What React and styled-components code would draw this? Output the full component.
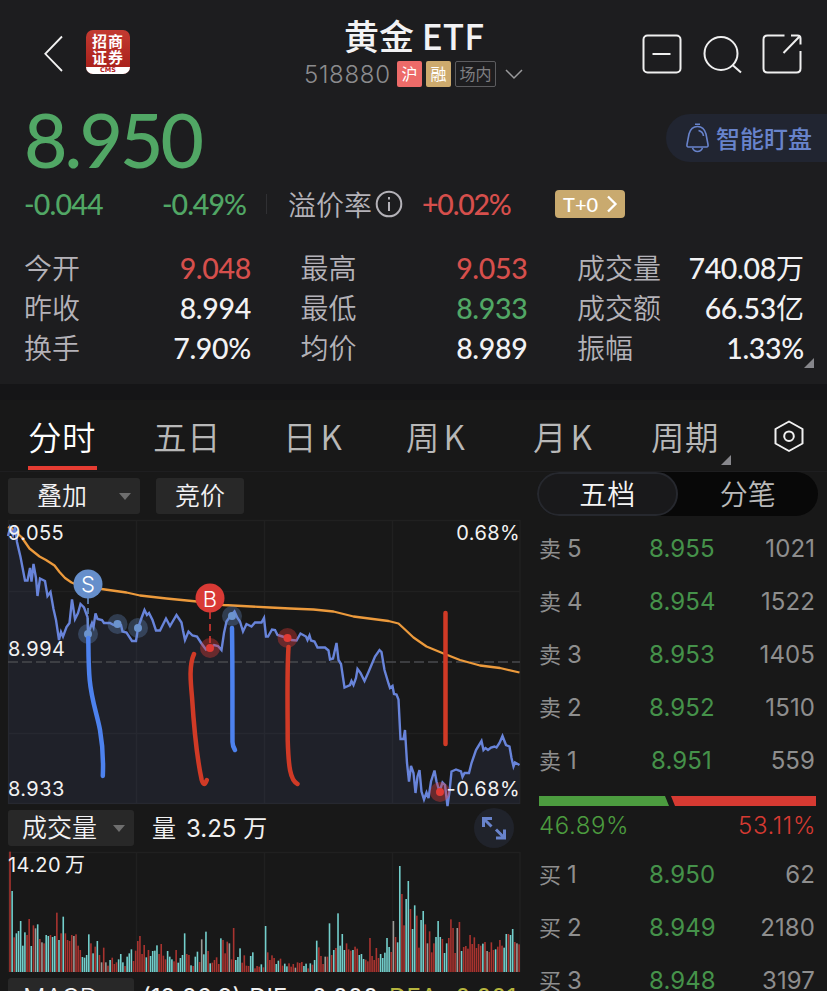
import React from "react";
import styled, { createGlobalStyle } from "styled-components";

const CJK = '"Noto Sans CJK SC", sans-serif';
const DIGITS = 'Lato, "Noto Sans CJK SC", sans-serif';
const UI = 'Inter, "Noto Sans CJK SC", sans-serif';

const tone = {
  up: "#d64f4c",
  down: "#51a765",
  plain: "#f2f2f4",
};

const GlobalStyle = createGlobalStyle`
  *, *::before, *::after { box-sizing: border-box; }
  html, body { margin: 0; background: #181818; overflow: hidden; }
  svg { display: block; }
`;

const Screen = styled.main`
  width: 827px;
  height: 991px;
  overflow: hidden;
  background: #181818;
  font-family: ${CJK};
  color: #f2f2f4;
  white-space: nowrap;
`;

const Quote = styled.section`
  height: 384px;
  background: #1d1d1f;
`;

const TopBar = styled.header`
  display: grid;
  grid-template-columns: 280px 268px 279px;
  height: 96px;
`;

const TopLeft = styled.div`
  display: flex;
  gap: 22px;
  padding: 30px 0 0 43px;
`;

const Logo = styled.div`
  display: flex;
  flex-direction: column;
  width: 44px;
  height: 44px;
  border-radius: 7px;
  overflow: hidden;
  background: linear-gradient(#c33a31, #a51d18);
  text-align: center;
`;

const LogoName = styled.div`
  height: 37px;
  padding-top: 3px;
  font: 700 15px/16px ${CJK};
  letter-spacing: 1px;
  color: #fff;
`;

const LogoFoot = styled.div`
  height: 7px;
  background: #fff;
  color: #b3201c;
  font: 700 6.5px/7px "DejaVu Sans", sans-serif;
`;

const Heading = styled.div`
  display: flex;
  flex-direction: column;
  align-items: center;
  padding-top: 14px;
`;

const Title = styled.h1`
  margin: 0;
  font: 500 35px/42px ${CJK};
`;

const SubTitle = styled.div`
  display: flex;
  align-items: center;
  gap: 4px;
  height: 26px;
  margin: 5px 0 0 2px;
`;

const Code = styled.span`
  width: 89px;
  font: 300 24px/28px ${UI};
  letter-spacing: 0.7px;
  padding-top: 2px;
  color: #8c8c8e;
`;

const Tag = styled.span`
  height: 26px;
  width: ${(p) => p.$width}px;
  border-radius: 2px;
  border: ${(p) => (p.$outlined ? "1px solid #5c5c5f" : "0")};
  background: ${(p) => p.$fill || "transparent"};
  color: ${(p) => (p.$outlined ? "#7f7f82" : "#fff")};
  font: 400 16px/${(p) => (p.$outlined ? 23 : 25)}px ${CJK};
  text-align: center;
`;

const Actions = styled.div`
  display: flex;
  gap: 20px;
  padding: 33.5px 0 0 93.5px;
`;

const PriceRow = styled.div`
  display: flex;
  justify-content: space-between;
  height: 84px;
`;

const BigPrice = styled.div`
  padding-left: 24px;
  font: 500 75px/86px ${DIGITS};
  letter-spacing: -2.9px;
  color: #51a765;
`;

const WatchButton = styled.div`
  display: flex;
  align-items: center;
  gap: 6px;
  width: 161px;
  height: 48px;
  margin-top: 18px;
  padding-left: 19px;
  border-radius: 24px 0 0 24px;
  background: #212531;
  color: #6883cb;
  font: 500 24px/48px ${CJK};
`;

const ChangeRow = styled.div`
  display: flex;
  align-items: center;
  height: 48px;
  padding-left: 24px;
`;

const Figure = styled.span`
  width: ${(p) => p.$width}px;
  font: 500 28.5px/40px ${DIGITS};
  letter-spacing: ${(p) => p.$track ?? -1}px;
  color: ${(p) => tone[p.$tone]};
`;

const Separator = styled.i`
  width: 1px;
  height: 20px;
  margin-right: 21px;
  background: #303033;
`;

const Label = styled.span`
  font: 350 28px/38px ${CJK};
  color: #b4b2b8;
`;

const InfoMark = styled.span`
  width: 27px;
  margin: 0 20px 0 3px;
`;

const TPlus = styled.span`
  display: flex;
  align-items: center;
  gap: 8px;
  width: 70px;
  height: 28px;
  padding-left: 8px;
  border-radius: 4px;
  background: #c9aa6f;
  color: #fff;
  font: 500 20px/28px ${DIGITS};
`;

const Stats = styled.div`
  position: relative;
  display: grid;
  grid-template-columns: 227px 227px 227px;
  column-gap: 49.5px;
  grid-auto-rows: 40px;
  padding: 20px 0 0 24px;
`;

const Stat = styled.div`
  display: flex;
  justify-content: space-between;
`;

const StatValue = styled.span`
  font: 500 28.5px/40px ${DIGITS};
  letter-spacing: -0.3px;
  color: ${(p) => tone[p.$tone]};
`;

const Unit = styled.span`
  font: 400 28px/38px ${CJK};
  letter-spacing: 0;
`;

const Corner = styled.i`
  position: absolute;
  right: ${(p) => p.$right}px;
  bottom: ${(p) => p.$bottom}px;
  border-left: 10px solid transparent;
  border-bottom: 10px solid #87878c;
`;

const Band = styled.div`
  height: 16px;
  background: #151517;
`;

const Tabs = styled.nav`
  display: flex;
  align-items: flex-start;
  height: 72px;
  padding: 12px 0 0 28px;
  border-bottom: 1px solid #1e1e20;
`;

const Tab = styled.div`
  position: relative;
  height: 58px;
  width: ${(p) => p.$width}px;
  margin-right: ${(p) => p.$gap}px;
  border-bottom: 4px solid ${(p) => (p.$active ? "#e53c32" : "transparent")};
  font: 350 33.5px/48px ${CJK};
  letter-spacing: 0.5px;
  word-spacing: -4.5px;
  color: ${(p) => (p.$active ? "#fff" : "#b8b8b8")};
`;

const Columns = styled.div`
  display: grid;
  grid-template-columns: 529px 298px;
`;

const ChartColumn = styled.section`
  padding: 6px 0 0 8px;
`;

const ToolRow = styled.div`
  display: flex;
  align-items: center;
  height: ${(p) => p.$height}px;
  padding-bottom: ${(p) => p.$below ?? 0}px;
`;

const Chip = styled.div`
  display: flex;
  align-items: center;
  justify-content: space-between;
  width: ${(p) => p.$width}px;
  height: 36px;
  margin-right: 16px;
  padding: ${(p) => p.$drop ?? 0}px 9px 0 ${(p) => p.$inset}px;
  border-radius: 3px;
  background: #282828;
  font: 350 25px/36px ${UI};
`;

const Caret = styled.i`
  border: 6px solid transparent;
  border-top: 7px solid #6e6e6e;
  border-bottom: 0;
`;

const Metric = styled.span`
  font: 400 24px/36px ${UI};
  color: ${(p) => p.$color || "#f0f0f0"};
  margin-left: ${(p) => p.$left ?? 0}px;
  padding-top: ${(p) => p.$drop ?? 1}px;
`;

const Expand = styled.span`
  display: grid;
  place-items: center;
  width: 40px;
  height: 40px;
  margin: 0 15px 0 auto;
  border-radius: 50%;
  background: #20232b;
`;

const Plot = styled.div`
  position: relative;
  width: 521px;
  height: ${(p) => p.$height}px;
  & > svg { overflow: visible; }
`;

const AxisLabel = styled.span`
  position: absolute;
  top: ${(p) => p.$top}px;
  ${(p) => (p.$right ? "right: 9px;" : "left: 0;")}
  font: 400 20px/24px ${UI};
  letter-spacing: 0.4px;
  word-spacing: -2px;
  color: #f2f2f2;
`;

const Book = styled.aside`
  font-family: ${UI};
`;

const Segments = styled.div`
  display: flex;
  width: 281px;
  height: 44px;
  margin-left: 8px;
  border-radius: 22px;
  background: #080808;
`;

const Segment = styled.div`
  flex: 1;
  height: 44px;
  border-radius: 22px;
  border: 2px solid ${(p) => (p.$active ? "#26282e" : "transparent")};
  background: ${(p) => (p.$active ? "#19191b" : "transparent")};
  color: ${(p) => (p.$active ? "#f4f4f4" : "#b9b9b9")};
  font: 350 28px/39px ${CJK};
  text-align: center;
`;

const Orders = styled.div`
  padding: ${(p) => p.$top}px 12px 0 10px;
`;

const Order = styled.div`
  display: grid;
  grid-template-columns: 110px 65px 101px;
  align-items: center;
  height: 53px;
  font: 400 24px/30px ${UI};
  letter-spacing: 0.1px;
  color: #8e8e8e;
`;

const Side = styled.span`
  display: flex;
  gap: 6px;
  align-items: center;
`;

const SideName = styled.span`
  height: 30px;
  font: 400 22px/26px ${CJK};
  letter-spacing: 0;
`;

const OrderPrice = styled.span`
  text-align: center;
  color: #45924a;
`;

const OrderSize = styled.span`
  text-align: right;
`;

const Balance = styled.div`
  display: flex;
  height: 10px;
  width: 277px;
  margin: 9px 0 0 10px;
`;

const BuyShare = styled.i`
  width: 130px;
  background: #4c9c3f;
  clip-path: polygon(0 0, 126px 0, 130px 100%, 0 100%);
`;

const SellShare = styled.i`
  flex: 1;
  margin-left: 2px;
  background: #d63a32;
  clip-path: polygon(0 0, 100% 0, 100% 100%, 4px 100%);
`;

const BalanceText = styled.div`
  display: flex;
  justify-content: space-between;
  width: 277px;
  margin: 5px 0 0 10px;
  font: 350 24px/30px ${UI};
  letter-spacing: 0.6px;
  color: #d63a32;

  & > :first-child { color: #4c9c3f; }
`;

const PRICE =
  "8,536 10,528 13,535 15,527 17,542 20.5,557 25,580.5 27.5,580.5 30,568 31.5,581.5 33.5,564 36,578 37.5,596 40,578.5 45,581 47.5,596 50.5,592 53.5,609 56,620 59,640 61,632 63,636.5 66.5,627 69.5,623 72,599.5 75,619 78,613 80.5,604 84,607.5 87.5,617 88,634 92,623 93.5,627 95.5,613.5 97.5,619 102,620 104,623 110,623 113.5,625 117.5,623 121,625 122.5,631.5 126.5,632.5 132,641 136,641 138,628 141.5,618 144.5,610 147,615 149,613 152.5,620 156,630.5 160,630.5 166,618.5 170,626 176.5,615 181.5,622.5 183,630.5 185,640 188.5,631.5 192.5,635.5 197,636.5 201.5,643.5 206,649.5 210,648 214,645 218,646 221.5,650 224,633 226.5,621.5 230,616.5 234.5,611.5 237.5,618 240,621.5 243,631.5 246.5,624 251.5,626.5 255,622.5 261.5,622.5 264,618 266,636.5 268,636.5 272,629.5 275,630 277.5,635 282.5,636.5 287.5,638 291.5,640 296.5,640.5 300.5,633.5 306,636.5 307.5,640 309.5,635.5 311,640.5 314.5,641.5 317.5,647.5 325,647.5 328.5,650.5 330,659.5 333,658.5 336.5,643 338.5,660 341,664 344.5,687.5 350,685 351.5,681 353.5,685 356,678 357.5,669 360.5,673 364.5,681 368.5,672 375,656.5 379.5,650 381.5,652 384.5,670 388.5,683.5 390,688 392.5,686 394,694 396.5,694.5 398.5,699.5 400.5,739 403.5,739 405,730 407,763 409,781.5 411,766 413.5,773 415.5,793 417.5,776.5 419.5,770 421.5,791.5 424,799.5 426.5,792.5 428.5,798 431,781.5 434.5,770.5 436.5,781.5 439.5,791.5 442.5,782.5 445,785 447.5,806 449.5,791.5 451.5,771.5 456,769.5 461,771.5 462.5,777 464.5,773 469,773 471.5,763 476,750 481.5,741 483.5,750 485.5,748 488,750 491,747.5 494.5,746.5 496.5,747.5 499.5,743 502.5,736 506,745 509.5,746.5 511.5,758 513.5,766.5 515,762.5 519.5,765";

const AVERAGE =
  "8,527 12,529 17,533 21.5,537 29.5,548.5 39.5,556.5 46,560 54.5,565.5 59.5,572 65,578 71.5,582.5 80,586 101.5,589 126.5,592.5 140,595.5 166.5,598.5 197,601.5 223.5,605 270,607.5 290,608.5 313.5,609.5 333.5,611.5 353.5,616.5 388.5,621 398.5,623.5 405,629.5 413.5,637.5 426.5,646.5 443.5,653.5 460,660 480,665.5 500,668 519.5,672.5";

// Each entry is a colour key (r red, c cyan, w grey) and the bar's top edge in thirds of a pixel.
const VOLUME =
  "r155 c273 r412 c400 c393 c363 c437 c397 r405 r357 c438 r376 w385 c373 r417 w427 r430 c405 c408 r405 c411 c408 r338 c420 r400 c350 r400 r420 r423 r405 w408 r403 r437 r450 c471 c473 c465 c403 r430 c460 r440 c423 r465 w487 r443 w487 r497 c480 r473 r492 r487 c478 c462 c487 r498 c470 c460 c448 r483 r452 r423 r408 r462 r435 c472 r450 c468 c453 c452 c436 r462 r432 r467 r478 c453 c470 c478 r484 r450 c488 c474 c465 c400 r462 r465 c496 r498 c470 c455 r486 w418 c463 c395 r453 c490 r488 r480 r472 r492 c415 r420 r460 r425 w430 r478 r384 c480 c471 c445 r488 r466 r497 r498 c468 c457 r505 r498 r500 c493 r502 c378 r457 r480 r466 r474 c492 c482 r476 r497 c491 c499 r490 r500 r492 w503 r487 r489 r486 c498 c491 r505 c490 r494 c480 c422 r442 r468 r492 w470 r470 c370 r465 c450 r444 c340 c437 c402 c450 r430 r448 r452 c450 r440 r446 c465 c462 c477 r479 r484 r414 r468 r480 r444 r474 c462 c474 c458 c414 c441 r456 w363 r411 c427 c198 r282 r376 c297 c243 r327 c387 c316 r347 r443 c360 c333 r373 w430 r394 r457 r430 c411 c363 c411 r417 c459 c430 r414 r358 r384 r459 w384 r366 c453 r441 r438 r446 r405 r432 r412 r444 r432 r437 c431 r426 w453 r456 r427 r450 c448 r440 r420 r437 c443 c402 r402 c405 c387 r426 w430 r433".split(" ");

const BAR_COLORS = { r: "#a8332f", c: "#73cfcc", w: "#9b9a96" };

const STATS = [
  ["今开", "9.048", "up"],
  ["最高", "9.053", "up"],
  ["成交量", "740.08", "plain", "万"],
  ["昨收", "8.994", "plain"],
  ["最低", "8.933", "down"],
  ["成交额", "66.53", "plain", "亿"],
  ["换手", "7.90%", "plain"],
  ["均价", "8.989", "plain"],
  ["振幅", "1.33%", "plain"],
];

const TABS = [
  ["分时", 69, 56],
  ["五日", 69, 61],
  ["日 K", 60, 63],
  ["周 K", 64, 63],
  ["月 K", 62, 56],
  ["周期", 69, 53],
];

const SELLS = [
  ["5", "8.955", "1021"],
  ["4", "8.954", "1522"],
  ["3", "8.953", "1405"],
  ["2", "8.952", "1510"],
  ["1", "8.951", "559"],
];

const BUYS = [
  ["1", "8.950", "62"],
  ["2", "8.949", "2180"],
  ["3", "8.948", "3197"],
];

const BLUE_DOTS = [[88, 634], [117.5, 624], [138, 628], [232, 616]];
const RED_DOTS = [[210, 648], [287.5, 638], [440, 792]];

function BackIcon() {
  return (
    <svg width="21" height="46" fill="none" stroke="#f2f2f2" strokeWidth="1.8">
      <path d="M19 6.5 2.3 23.8 19 41" />
    </svg>
  );
}

function HeaderIcons() {
  const line = { fill: "none", stroke: "#efefef", strokeWidth: 2 };
  return (
    <Actions>
      <svg width="40" height="40" {...line}>
        <rect x="1.5" y="1.5" width="37" height="37" rx="4" />
        <path d="M10.5 20H28.5" />
      </svg>
      <svg width="40" height="40" {...line}>
        <circle cx="19" cy="19.5" r="16.5" />
        <path d="M30.5 31 39 38.5" />
      </svg>
      <svg width="40" height="40" {...line}>
        <path d="M22.5 1.5H5.5Q1.5 1.5 1.5 5.5V34.5Q1.5 38.5 5.5 38.5H34.5Q38.5 38.5 38.5 34.5V17M29 1.5H35.5Q38.5 1.5 38.500 4.5V10.5M37.5 2.5 21.5 19" />
      </svg>
    </Actions>
  );
}

function BellIcon() {
  return (
    <svg width="25" height="30" fill="none" stroke="#6883cb" strokeWidth="1.6">
      <path d="M10 1.2H15M3.5 24Q1.5 24 2 21.5L4 11Q6 3.5 12.5 3.5T21 11L23 21.5Q23.5 24 21.5 24ZM7.5 25Q9 28.5 12.5 28.5T17.5 25M13.5 7.5Q18 8.5 18.5 13" />
    </svg>
  );
}

function SettingsIcon() {
  return (
    <svg width="32" height="48" fill="none" stroke="#f0f0f0" strokeWidth="2" strokeLinejoin="round">
      <path d="M16 9.5 29.5 17V31.5L16 39 2.5 31.5V17Z" />
      <circle cx="16" cy="24.2" r="4.8" />
    </svg>
  );
}

function PriceChart() {
  return (
    <Plot $height={284}>
      <svg width="521" height="285" viewBox="8 520 521 285" fill="none">
        <polygon points={`${PRICE} 520,804 8,804`} fill="#1f2129" />
        <path
          d="M8.5 520V804M136.5 520V804M264.5 520V804M392.5 520V804M520 520V804M8 520.5H520M8 591.5H520M8 733.5H520M8 803.5H520"
          stroke="#fff"
          strokeOpacity="0.035"
          strokeWidth="1.5"
        />
        <path d="M8 662H520" stroke="#48494d" strokeWidth="1.5" strokeDasharray="10 4" />
        <polyline points={AVERAGE} stroke="#ec9a3c" strokeWidth="2.3" strokeLinejoin="round" />
        <polyline points={PRICE} stroke="#6884da" strokeWidth="2.4" strokeLinejoin="miter" />
        <path d="M88 598V630" stroke="#6b93cd" strokeWidth="1.5" strokeDasharray="6 4" />
        <path d="M210 612V646" stroke="#c23530" strokeWidth="1.8" strokeDasharray="7 5" />
        {BLUE_DOTS.map(([x, y]) => (
          <g key={x} fill="#6b93cd">
            <circle cx={x} cy={y} r="10" fillOpacity="0.3" />
            <circle cx={x} cy={y} r="4" />
          </g>
        ))}
        {RED_DOTS.map(([x, y]) => (
          <g key={x} fill="#e03a34">
            <circle cx={x} cy={y} r="10" fillOpacity="0.38" />
            <circle cx={x} cy={y} r="4" />
          </g>
        ))}
        <circle cx="88" cy="584" r="14.5" fill="#668fcb" />
        <circle cx="210" cy="598" r="14.5" fill="#d93a35" />
        <g fill="#fff" fontFamily="Inter, sans-serif" fontSize="22" fontWeight="350" textAnchor="middle">
          <text x="88" y="592">S</text>
          <text x="210" y="606.5">B</text>
        </g>
        <g strokeWidth="4.5" strokeLinecap="round" strokeLinejoin="round">
          <g stroke="#4d82ee">
            <path d="M88.3 638C88.5 655 88.5 668 89.7 680C91.5 700 97 714 100 730C103 747 103.5 760 102.8 776" />
            <path d="M232 628C232.7 670 232.3 710 232.5 742Q232.5 746 235 750" />
          </g>
          <g stroke="#d03a26">
            <path d="M194 654C189 665 190.5 681 192 697C194 728 198 763 201.7 780Q204 788 206.8 780" />
            <path d="M288.5 647C286.8 672 287.7 713 287.7 740C288.5 766 290 780 297.5 784" />
            <path d="M445.5 613V744" />
          </g>
        </g>
      </svg>
      <AxisLabel $top={1}>9.055</AxisLabel>
      <AxisLabel $top={117}>8.994</AxisLabel>
      <AxisLabel $top={257}>8.933</AxisLabel>
      <AxisLabel $top={1} $right>0.68%</AxisLabel>
      <AxisLabel $top={257} $right>-0.68%</AxisLabel>
    </Plot>
  );
}

function VolumeChart() {
  return (
    <Plot $height={120}>
      <svg width="521" height="121" viewBox="8 852 521 121">
        <path
          d="M8.5 852V972M136.5 852V972M264.5 852V972M392.5 852V972M520 852V972M8 852.5H520"
          stroke="#fff"
          strokeOpacity="0.035"
          strokeWidth="1.5"
        />
        {VOLUME.map((bar, i) => {
          const top = 800 + Number(bar.slice(1)) / 3;
          return (
            <rect
              key={i}
              x={9.2 + i * 2.13}
              y={top}
              width="1.6"
              height={972 - top}
              fill={BAR_COLORS[bar[0]]}
            />
          );
        })}
      </svg>
      <AxisLabel $top={1}>14.20 万</AxisLabel>
    </Plot>
  );
}

function OrderRows({ side, rows }) {
  return rows.map(([level, price, size]) => (
    <Order key={level}>
      <Side>
        <SideName>{side}</SideName>
        {level}
      </Side>
      <OrderPrice>{price}</OrderPrice>
      <OrderSize>{size}</OrderSize>
    </Order>
  ));
}

export default function App() {
  return (
    <Screen>
      <GlobalStyle />
      <Quote>
        <TopBar>
          <TopLeft>
            <BackIcon />
            <Logo>
              <LogoName>招商<br />证券</LogoName>
              <LogoFoot>CMS</LogoFoot>
            </Logo>
          </TopLeft>
          <Heading>
            <Title>黄金 ETF</Title>
            <SubTitle>
              <Code>518880</Code>
              <Tag $width={25} $fill="#ed6b69">沪</Tag>
              <Tag $width={25} $fill="#cdaa6d">融</Tag>
              <Tag $width={41} $outlined>场内</Tag>
              <svg width="26" height="12" fill="none" stroke="#9a9a9c" strokeWidth="1.5">
                <path d="M6 2 14 10 22 2" />
              </svg>
            </SubTitle>
          </Heading>
          <HeaderIcons />
        </TopBar>
        <PriceRow>
          <BigPrice>8.950</BigPrice>
          <WatchButton>
            <BellIcon />
            智能盯盘
          </WatchButton>
        </PriceRow>
        <ChangeRow>
          <Figure $tone="down" $width={138} $track={-0.8}>-0.044</Figure>
          <Figure $tone="down" $width={104}>-0.49%</Figure>
          <Separator />
          <Label>溢价率</Label>
          <InfoMark>
            <svg width="28" height="28" fill="none" stroke="#b4b2b8" strokeWidth="2">
              <circle cx="14" cy="14" r="12.3" />
              <path d="M14 12V21M14 7V9.5" />
            </svg>
          </InfoMark>
          <Figure $tone="up" $width={133} $track={-1.2}>+0.02%</Figure>
          <TPlus>
            T+0
            <svg width="12" height="18" fill="none" stroke="#fff" strokeWidth="2.3">
              <path d="M2 1.5 9.5 9 2 16.5" />
            </svg>
          </TPlus>
        </ChangeRow>
        <Stats>
          {STATS.map(([label, value, t, unit]) => (
            <Stat key={label}>
              <Label>{label}</Label>
              <StatValue $tone={t}>
                {value}
                {unit && <Unit>{unit}</Unit>}
              </StatValue>
            </Stat>
          ))}
          <Corner $right={13} $bottom={0} />
        </Stats>
      </Quote>
      <Band />
      <Tabs>
        {TABS.map(([name, width, gap], i) => (
          <Tab key={name} $active={i === 0} $width={width} $gap={gap}>
            {name}
            {name === "周期" && <Corner $right={-11} $bottom={1} />}
          </Tab>
        ))}
        <SettingsIcon />
      </Tabs>
      <Columns>
        <ChartColumn>
          <ToolRow $height={42} $below={6}>
            <Chip $width={132} $inset={29}>叠加<Caret /></Chip>
            <Chip $width={88} $inset={19}>竞价</Chip>
          </ToolRow>
          <PriceChart />
          <ToolRow $height={48}>
            <Chip $width={126} $inset={14}>成交量<Caret /></Chip>
            <Metric $left={2}>量</Metric>
            <Metric $left={10}>3.25 万</Metric>
            <Expand>
              <svg width="26" height="24" fill="none" stroke="#6883cb" strokeWidth="3">
                <path d="M11 2.5H2.5V11M2.5 2.5 10.5 10.5M15 22H23.5V13.5M23.5 22 15 13.5" />
              </svg>
            </Expand>
          </ToolRow>
          <VolumeChart />
          <ToolRow $height={48}>
            <Chip $width={126} $inset={15} $drop={3}>MACD<Caret /></Chip>
            <Metric $left={-8} $drop={3}>(12,26,9)</Metric>
            <Metric $left={8} $drop={3}>DIF: -0.000</Metric>
            <Metric $left={11} $drop={3} $color="#b6b53d">DEA:-0.001</Metric>
          </ToolRow>
        </ChartColumn>
        <Book>
          <Segments>
            <Segment $active>五档</Segment>
            <Segment>分笔</Segment>
          </Segments>
          <Orders $top={6}>
            <OrderRows side="卖" rows={SELLS} />
          </Orders>
          <Balance>
            <BuyShare />
            <SellShare />
          </Balance>
          <BalanceText>
            <span>46.89%</span>
            <span>53.11%</span>
          </BalanceText>
          <Orders $top={7}>
            <OrderRows side="买" rows={BUYS} />
          </Orders>
        </Book>
      </Columns>
    </Screen>
  );
}
